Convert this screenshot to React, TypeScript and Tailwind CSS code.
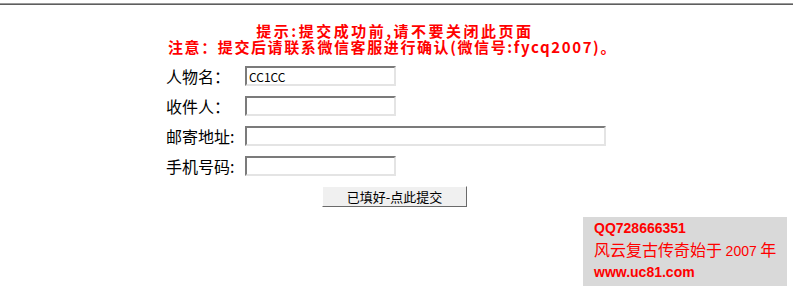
export default function App() {
  const label = 'w-[79px] shrink-0 text-[16px] text-black'
  const inputCls =
    'h-[20px] border-2 border-t-[#7b7b7b] border-l-[#7b7b7b] border-r-[#e4e4e4] border-b-[#e4e4e4] bg-white px-[2px] text-[12px] text-black outline-none'
  const latin = { fontFamily: '"Liberation Sans", sans-serif' }

  return (
    <div
      className="relative h-[291px] w-full overflow-hidden bg-white"
      style={{ fontFamily: '"Noto Sans CJK SC", "Liberation Sans", sans-serif' }}
    >
      {/* 顶部分隔线 */}
      <div className="mt-[3px] border-t border-b border-t-[#9a9a9a] border-b-[#5e5e5e]" />

      <div className="mx-auto w-[461px]">
        {/* 提示 */}
        <div className="mt-[18px] flex flex-col items-center text-[15px] font-bold leading-[16px] text-[#f00]">
          <div className="-ml-[3px] tracking-[2.5px]">提示:提交成功前,请不要关闭此页面</div>
          <div className="-ml-[8px] whitespace-nowrap tracking-[1.6px]">注意：提交后请联系微信客服进行确认(微信号:fycq2007)。</div>
        </div>

        {/* 表单 */}
        <form className="mt-[6px]" onSubmit={(e) => e.preventDefault()}>
          <div className="flex h-[30px] items-center">
            <span className={label}>人物名：</span>
            <input className={`${inputCls} w-[151px]`} defaultValue="CC1CC" />
          </div>
          <div className="flex h-[30px] items-center">
            <span className={label}>收件人：</span>
            <input className={`${inputCls} w-[151px]`} />
          </div>
          <div className="flex h-[30px] items-center">
            <span className={label}>邮寄地址:</span>
            <input className={`${inputCls} w-[361px]`} />
          </div>
          <div className="flex h-[30px] items-center">
            <span className={label}>手机号码:</span>
            <input className={`${inputCls} w-[151px]`} />
          </div>
          <button
            type="submit"
            className="ml-[156px] mt-[5px] h-[21px] w-[145px] border border-t-white border-l-white border-r-[#6a6a6a] border-b-[#6a6a6a] bg-[#f0f0f0] text-[13px] leading-[19px] text-black"
          >
            已填好-点此提交
          </button>
        </form>
      </div>

      {/* 右下角浮动广告 */}
      <div className="absolute left-[583px] top-[217px] h-[69px] w-[204px] bg-[#d9d9d9] pl-[11px] pt-[1px] font-bold leading-[21px] text-[#f00]">
        <div className="text-[14px]" style={latin}>QQ728666351</div>
        <div className="whitespace-nowrap text-[16px] font-normal">
          风云复古传奇始于 <span className="text-[14px]" style={latin}>2007</span> 年
        </div>
        <div className="text-[14px]" style={latin}>www.uc81.com</div>
      </div>
    </div>
  )
}
